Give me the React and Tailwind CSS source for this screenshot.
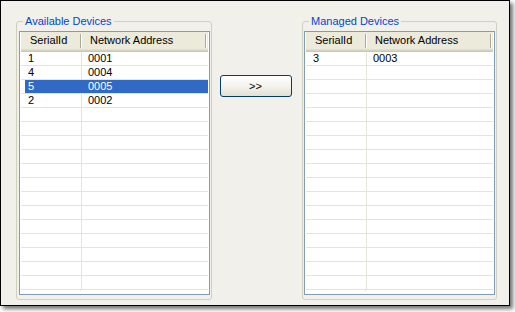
import React from "react";

const available = [
  { id: "1", addr: "0001" },
  { id: "4", addr: "0004" },
  { id: "5", addr: "0005", selected: true },
  { id: "2", addr: "0002" },
];

const managed = [{ id: "3", addr: "0003" }];

function DeviceList({ rows }) {
  const filled = [...rows];
  while (filled.length < 17) filled.push(null);

  return (
    <div className="flex-1 flex flex-col border border-[#7f9db9] bg-white px-px overflow-hidden">
      {/* column header */}
      <div className="flex items-center h-[20px] pb-[3px] bg-[#ebeadb] shadow-[inset_0_-1px_0_#cbc7b8,inset_0_-2px_0_#d6d2c2,inset_0_-3px_0_#e2decd] shrink-0">
        <div className="w-[59px] pl-[9px]">SerialId</div>
        <div className="w-px h-[14px] bg-[#aca899]" />
        <div className="w-px h-[14px] bg-white" />
        <div className="flex-1 pl-[8px]">Network Address</div>
        <div className="w-px h-[14px] bg-[#aca899]" />
        <div className="w-px h-[14px] bg-white mr-px" />
      </div>
      {filled.map((row, i) => (
        <div key={i} className="flex h-[14px] border-b border-[#e6e4d8] shrink-0">
          <div className="w-[4px] shrink-0" />
          <div className={"flex-1 flex " + (row && row.selected ? "bg-[#316ac5] text-white" : "")}>
            <div
              className={
                "w-[57px] pl-[3px] leading-[13px] " +
                (row && row.selected ? "" : "border-r border-[#e6e4d8]")
              }
            >
              {row ? row.id : ""}
            </div>
            <div className="flex-1 pl-[6px] leading-[13px]">{row ? row.addr : ""}</div>
          </div>
        </div>
      ))}
      <div className="flex-1 flex">
        <div className="w-[60px] border-r border-[#e6e4d8] h-px" />
      </div>
    </div>
  );
}

function GroupBox({ title, width, padClass, legendClass, children }) {
  return (
    <fieldset
      className={`${width} h-[285px] border border-[#d0d0bf] rounded-[3px] ${padClass} pt-[3px] pb-[4px] flex flex-col shrink-0`}
    >
      <legend className={`${legendClass} px-[2px] text-[11px] leading-[13px] text-[#0046d5]`}>{title}</legend>
      {children}
    </fieldset>
  );
}

export default function App() {
  return (
    <div className="w-[515px] h-[312px] bg-white">
      <div
        className="w-[510px] h-[306px] border border-black bg-[#f1f0ea] shadow-[3px_3px_4px_rgba(0,0,0,0.55)] flex pl-[15px] pt-[14px] text-[11px] text-black"
        style={{ fontFamily: '"Liberation Sans", Arial, sans-serif' }}
      >
        <GroupBox title="Available Devices" width="w-[196px]" padClass="pl-[2px] pr-[1px]" legendClass="ml-[4px]">
          <DeviceList rows={available} />
        </GroupBox>

        <div className="flex-1 flex justify-center items-start pt-[60px] pr-[3px]">
          <button className="w-[72px] h-[22px] rounded-[3px] border border-[#003c74] bg-gradient-to-b from-white via-[#f4f3ee] to-[#e3e0d2] text-[11px] leading-none text-black">
            &gt;&gt;
          </button>
        </div>

        <GroupBox title="Managed Devices" width="w-[195px]" padClass="px-[1px]" legendClass="ml-[5px]">
          <DeviceList rows={managed} />
        </GroupBox>
        <div className="w-[12px] shrink-0" />
      </div>
    </div>
  );
}
